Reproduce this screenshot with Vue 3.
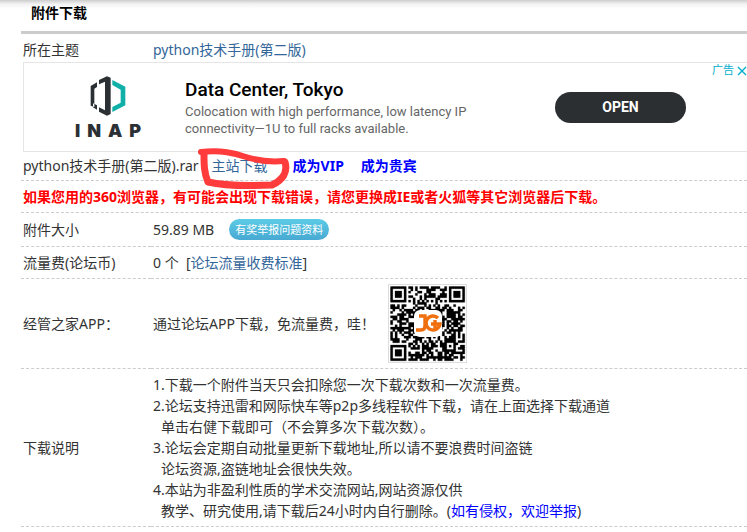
<script setup>
const SIZE = 33

// Finder squares sit in three corners, one alignment square in the fourth.
function ring(x, y, cx, cy, radius) {
  const d = Math.max(Math.abs(x - cx), Math.abs(y - cy))
  if (d > radius) return null
  return radius === 4 ? d <= 1 || d === 3 : d !== 1
}

function isDark(x, y) {
  for (const [cx, cy, r] of [[3, 3, 4], [29, 3, 4], [3, 29, 4], [26, 26, 2]]) {
    const hit = ring(x, y, cx, cy, r)
    if (hit !== null) return hit
  }
  if (y === 6 || x === 6) return (x + y) % 2 === 0
  let h = (x * 374761393 + y * 668265263) | 0
  h = Math.imul(h ^ (h >>> 13), 1274126177)
  return ((h ^ (h >>> 16)) & 1023) < 560
}

let qrPath = ''
for (let y = 0; y < SIZE; y++) {
  for (let x = 0; x < SIZE; x++) {
    if (isDark(x, y)) qrPath += `M${x} ${y}h1v1h-1z`
  }
}
</script>

<template>
  <main class="page">
    <h1 class="title">附件下载</h1>
    <table class="info">
      <tbody>
        <tr class="plain topic">
          <th scope="row">所在主题</th>
          <td><a href="#topic">python技术手册(第二版)</a></td>
        </tr>
        <tr class="plain">
          <td colspan="2" class="ad-cell">
            <section class="ad">
              <div class="brand">
                <svg class="brand-mark" viewBox="84 34 108 120" aria-hidden="true">
                  <path fill="#2b3034" d="M105 53L86 64V123L97 127V72L105 67zM93 116L105 122V135L93 128z" />
                  <path fill="#2b3034" d="M111 46L135 35L146 39V148L135 153L111 141V128L129 137V51L111 59z" />
                  <path fill="#10b0a8" d="M151 46L190 66V122L151 142V127L176 114V75L151 61z" />
                </svg>
                <div class="brand-name"><span>I</span><span>N</span><span>A</span><span>P</span></div>
              </div>
              <div class="ad-copy">
                <h2>Data Center, Tokyo</h2>
                <p>Colocation with high performance, low latency IP<br />connectivity—1U to full racks available.</p>
              </div>
              <button type="button" class="open">OPEN</button>
              <div class="ad-tag">
                <span>广告</span>
                <svg viewBox="0 0 10 10" aria-hidden="true"><path d="M1 1L9 9M9 1L1 9" /></svg>
              </div>
            </section>
          </td>
        </tr>
        <tr class="file-row">
          <td colspan="2">
            <div class="file">
              <span>python技术手册(第二版).rar</span>
              <span class="marked">
                <a href="#download">主站下载</a>
                <svg class="scribble" viewBox="0 0 96 42" aria-hidden="true">
                  <path stroke-width="6" d="M4 6C25 4 37 7 49 11C65 16 76 16 87 15" />
                  <path stroke-width="7" d="M88 16C91 26 86 34 75 39C53 40 28 40 11 36C7 27 7 18 7 8" />
                </svg>
              </span>
              <a class="strong" href="#vip">成为VIP</a>
              <a class="strong" href="#guest">成为贵宾</a>
            </div>
          </td>
        </tr>
        <tr>
          <td colspan="2" class="warning">如果您用的360浏览器，有可能会出现下载错误，请您更换成IE或者火狐等其它浏览器后下载。</td>
        </tr>
        <tr class="size">
          <th scope="row">附件大小</th>
          <td>
            <div class="inline">
              <span>59.89 MB</span>
              <button type="button" class="badge">有奖举报问题资料</button>
            </div>
          </td>
        </tr>
        <tr>
          <th scope="row">流量费(论坛币)</th>
          <td>0 个&nbsp; [<a href="#fee">论坛流量收费标准</a>]</td>
        </tr>
        <tr class="app">
          <th scope="row">经管之家APP：</th>
          <td>
            <div class="inline">
              <span>通过论坛APP下载，免流量费，哇！</span>
              <svg class="qr" viewBox="0 0 79 79" role="img" aria-label="QR">
                <rect x="0.5" y="0.5" width="78" height="78" fill="#fff" stroke="#ddd" />
                <g transform="translate(2.5 2.5) scale(2.25)">
                  <path :d="qrPath" fill="#000" stroke="#000" stroke-width="0.12" />
                </g>
                <rect x="26" y="26" width="28" height="27" rx="6" fill="#fff" />
                <g fill="none" stroke="#f07010" stroke-width="3.4">
                  <path d="M31 32H37V42Q37 46 33 46H28" />
                  <path d="M50 34A7 7 0 1 0 52 40H43M47 36V44" />
                </g>
              </svg>
            </div>
          </td>
        </tr>
        <tr>
          <th scope="row">下载说明</th>
          <td class="notes">
            <p>1.下载一个附件当天只会扣除您一次下载次数和一次流量费。</p>
            <p>2.论坛支持迅雷和网际快车等p2p多线程软件下载，请在上面选择下载通道</p>
            <p class="more">单击右健下载即可（不会算多次下载次数）。</p>
            <p>3.论坛会定期自动批量更新下载地址,所以请不要浪费时间盗链</p>
            <p class="more">论坛资源,盗链地址会很快失效。</p>
            <p>4.本站为非盈利性质的学术交流网站,网站资源仅供</p>
            <p class="more">教学、研究使用,请下载后24小时内自行删除。(<a class="report" href="#report">如有侵权，欢迎举报</a>)</p>
          </td>
        </tr>
      </tbody>
    </table>
  </main>
</template>

<style>
body {
  margin: 0;
  background: #fff;
}
</style>

<style scoped>
.page {
  padding-left: 21px;
  background: linear-gradient(#cdcdcd, #f2f2f2 4px, #fff 9px);
  color: #333;
  font: 14px/21px "Noto Sans", "Noto Sans CJK SC", sans-serif;
  overflow: hidden;
}
.title {
  margin: 0;
  padding: 2px 0 8px 10px;
  border-bottom: 3px solid #ccc;
  color: #000;
  font-size: 14px;
  line-height: 21px;
}
.info {
  width: 100%;
  border-collapse: separate;
  border-spacing: 0;
}
th,
td {
  padding: 5px 0 5px 2px;
  border-bottom: 1px dashed #ccc;
  text-align: left;
  vertical-align: middle;
  font-weight: normal;
  white-space: nowrap;
}
th {
  width: 128px;
}
.plain > * {
  border-bottom: 0;
}
.topic > * {
  padding-top: 5px;
  padding-bottom: 2px;
}
a {
  color: #369;
  text-decoration: none;
}
.info .ad-cell {
  padding: 0 0 0 2px;
}
.ad {
  position: relative;
  display: flex;
  align-items: center;
  height: 88px;
  border: 1px solid #e5e5e5;
  border-right: 0;
  font-family: Roboto, "Noto Sans CJK SC", sans-serif;
}
.brand {
  display: flex;
  flex-direction: column;
  align-items: center;
  gap: 6px;
  width: 66px;
  margin: 0 44px 0 51px;
  padding-top: 2px;
}
.brand-mark {
  width: 36px;
  height: 40px;
}
.brand-name {
  display: flex;
  justify-content: space-between;
  width: 100%;
  color: #2b3034;
  font: 900 18px/18px Inter, sans-serif;
}
.ad-copy {
  flex: 1;
}
.ad-copy h2 {
  margin: 0;
  color: #000;
  font-size: 19px;
  font-weight: 500;
  line-height: 26px;
}
.ad-copy p {
  margin: 0;
  color: #666;
  font-size: 13px;
  line-height: 17px;
}
.open {
  width: 131px;
  height: 31px;
  margin-right: 61px;
  padding: 0;
  border: 0;
  border-radius: 16px;
  background: #2b2f32;
  color: #fff;
  font: 700 14px/31px Roboto, sans-serif;
}
.ad-tag {
  position: absolute;
  top: 2px;
  right: 0;
  display: flex;
  align-items: center;
  gap: 3px;
  color: #00aecd;
  font-size: 11px;
  line-height: 12px;
}
.ad-tag svg {
  width: 10px;
  height: 10px;
  fill: none;
  stroke: #00aecd;
  stroke-width: 1.4;
}
.file-row > * {
  padding-top: 3px;
  padding-bottom: 4px;
}
.file {
  display: flex;
  gap: 17px;
}
.marked {
  position: relative;
  margin: 0 8px 0 -4px;
}
.scribble {
  position: absolute;
  top: -9px;
  left: -15px;
  width: 96px;
  height: 42px;
  overflow: visible;
  fill: none;
  stroke: #ff3b3b;
  stroke-linecap: round;
  stroke-linejoin: round;
  pointer-events: none;
}
.strong {
  color: #00f;
  font-weight: bold;
}
.warning {
  color: #f00;
  font-weight: bold;
}
.inline {
  display: flex;
  align-items: center;
  gap: 15px;
}
.size > * {
  padding-top: 6px;
  padding-bottom: 6px;
}
.badge {
  height: 21px;
  padding: 0 6px;
  border: 0;
  border-radius: 11px;
  background: linear-gradient(#5ccbe6, #48a9d2);
  color: #fff;
  font: 11px/21px "Noto Sans CJK SC", sans-serif;
}
.qr {
  width: 79px;
  height: 79px;
}
.app .inline {
  gap: 13px;
}
.notes p {
  margin: 0;
}
.notes .more {
  padding-left: 8px;
}
.report {
  color: #00f;
}
</style>
